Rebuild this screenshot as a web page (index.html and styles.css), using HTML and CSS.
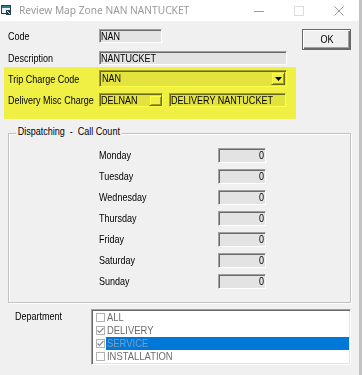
FILE: index.html
```html
<!DOCTYPE html>
<html lang="en">
<head>
<meta charset="utf-8">
<title>Review Map Zone</title>
<link rel="stylesheet" href="styles.css">
</head>
<body>
<div class="window">
  <header class="titlebar">
    <svg class="appicon" width="10" height="10" viewBox="0 0 10 10">
      <rect x="0.5" y="0.5" width="9" height="8" fill="#e8f0f4" stroke="#23404f"/>
      <rect x="1" y="1" width="8" height="2" fill="#2f7a90"/>
      <path d="M5 5h5v5H5z" fill="#23404f"/>
      <path d="M6 6l3 3" stroke="#e8f0f4"/>
    </svg>
    <span class="title">Review Map Zone NAN NANTUCKET</span>
    <div class="caption">
      <span class="cap-btn"><svg width="10" height="10" viewBox="0 0 10 10"><path d="M0 5.5h10" stroke="#9b9b9b"/></svg></span>
      <span class="cap-btn"><svg width="10" height="10" viewBox="0 0 10 10"><rect x="0.5" y="0.5" width="9" height="9" fill="none" stroke="#dcdcdc"/></svg></span>
      <span class="cap-btn"><svg width="10" height="10" viewBox="0 0 10 10"><path d="M0.5 0.5l9 9M9.5 0.5l-9 9" stroke="#9b9b9b"/></svg></span>
    </div>
  </header>
  <main class="client">
    <div class="top">
      <div class="fields">
        <div class="row">
          <span class="lbl">Code</span>
          <div class="edit code"><span class="t">NAN</span></div>
        </div>
        <div class="row gap8">
          <span class="lbl">Description</span>
          <div class="edit desc"><span class="t">NANTUCKET</span></div>
        </div>
        <div class="hl">
          <div class="row">
            <span class="lbl">Trip Charge Code</span>
            <div class="combo">
              <span class="combo-text"><span class="t">NAN</span></span>
              <span class="rbtn drop"><svg width="7" height="4" viewBox="0 0 7 4"><path d="M0 0h7L3.5 4z" fill="#000"/></svg></span>
            </div>
          </div>
          <div class="row gap6">
            <span class="lbl">Delivery Misc Charge</span>
            <div class="edit misc"><span class="misc-text"><span class="t">DELNAN</span></span><span class="rbtn mini"></span></div>
            <div class="edit miscdesc"><span class="t">DELIVERY NANTUCKET</span></div>
          </div>
        </div>
      </div>
      <button class="ok" type="button"><span class="t tc">OK</span></button>
    </div>

    <section class="group">
      <div class="group-title">Dispatching  -  Call Count</div>
      <div class="days">
        <span class="day">Monday</span><div class="edit num"><span class="t tr">0</span></div>
        <span class="day">Tuesday</span><div class="edit num"><span class="t tr">0</span></div>
        <span class="day">Wednesday</span><div class="edit num"><span class="t tr">0</span></div>
        <span class="day">Thursday</span><div class="edit num"><span class="t tr">0</span></div>
        <span class="day">Friday</span><div class="edit num"><span class="t tr">0</span></div>
        <span class="day">Saturday</span><div class="edit num"><span class="t tr">0</span></div>
        <span class="day">Sunday</span><div class="edit num"><span class="t tr">0</span></div>
      </div>
    </section>

    <div class="dept">
      <span class="dept-lbl">Department</span>
      <ul class="listbox">
        <li class="item"><span class="chk"></span><span class="txt"><span class="t">ALL</span></span></li>
        <li class="item"><span class="chk"><svg width="7" height="7" viewBox="0 0 7 7"><path d="M0.5 3.5l2 2 4-4.5" fill="none" stroke="#8a8a8a" stroke-width="1.2"/></svg></span><span class="txt"><span class="t">DELIVERY</span></span></li>
        <li class="item sel"><span class="chk"><svg width="7" height="7" viewBox="0 0 7 7"><path d="M0.5 3.5l2 2 4-4.5" fill="none" stroke="#8a8a8a" stroke-width="1.2"/></svg></span><span class="txt"><span class="t">SERVICE</span></span></li>
        <li class="item"><span class="chk"></span><span class="txt"><span class="t">INSTALLATION</span></span></li>
      </ul>
    </div>
  </main>
</div>
</body>
</html>
```

FILE: styles.css
```css
* { box-sizing: border-box; }
html, body { margin: 0; padding: 0; }
body {
  width: 362px;
  height: 375px;
  overflow: hidden;
  background: #f0f0f0;
  font-family: "Liberation Sans", Arial, sans-serif;
  font-size: 11px;
  line-height: 14px;
  color: #000;
}

/* condensed text, like the narrow dialog font */
.t,
.lbl,
.day,
.dept-lbl,
.group-title {
  display: inline-block;
  white-space: nowrap;
  transform: scaleX(0.82);
  transform-origin: 0 50%;
}
.tr { transform-origin: 100% 50%; }
.tc { transform-origin: 50% 50%; }

.window {
  width: 362px;
  height: 375px;
  border-right: 3px solid #c3c3c3;
  display: flex;
  flex-direction: column;
}
.titlebar {
  flex: none;
  height: 21px;
  background: #fff;
  display: flex;
  align-items: center;
}
.appicon { flex: none; margin: 0 8px 1px 1px; }
.title {
  flex: 1;
  font-family: "Noto Sans", sans-serif;
  font-size: 10.2px;
  line-height: 21px;
  color: #9a9a9a;
  white-space: nowrap;
  overflow: hidden;
}
.caption { display: flex; flex: none; }
.cap-btn {
  width: 40px;
  height: 21px;
  display: flex;
  align-items: center;
  justify-content: center;
}

.client { flex: 1; padding: 8px 8px 0 8px; }
.top { display: flex; justify-content: space-between; align-items: flex-start; }
.fields { display: flex; flex-direction: column; }
.row { display: flex; align-items: center; }
.gap8 { margin-top: 8px; }
.gap6 { margin-top: 6px; }
.lbl { width: 91px; flex: none; line-height: 14px; }

.edit {
  height: 14px;
  background: #e3e3e3;
  border: 1px solid;
  border-color: #a0a0a0 #fff #fff #a0a0a0;
  box-shadow: inset 1px 1px #696969;
  padding: 0 1px 0 1px;
  line-height: 12px;
  white-space: nowrap;
  overflow: hidden;
}
.code { width: 63px; }
.desc { width: 188px; }

.hl {
  position: relative;
  margin: 2px 0 0 -4px;
  padding: 3px 9px 12px 4px;
  width: 292px;
}
.hl::after {
  content: "";
  position: absolute;
  inset: 0;
  background: #ffff48;
  mix-blend-mode: multiply;
  pointer-events: none;
}

.combo {
  width: 188px;
  height: 17px;
  display: flex;
  align-items: center;
  background: #e3e3e3;
  border: 1px solid;
  border-color: #a0a0a0 #fff #fff #a0a0a0;
  box-shadow: inset 1px 1px #696969;
  padding: 1px;
}
.combo-text { flex: 1; line-height: 13px; padding-left: 1px; overflow: hidden; }
.rbtn {
  display: flex;
  align-items: center;
  justify-content: center;
  flex: none;
  background: #f0f0f0;
  border: 1px solid;
  border-color: #e3e3e3 #696969 #696969 #e3e3e3;
  box-shadow: inset 1px 1px #fff, inset -1px -1px #a0a0a0;
}
.drop { width: 14px; height: 13px; }
.misc { width: 64px; display: flex; padding-right: 0; }
.misc-text { flex: 1; }
.mini { width: 13px; height: 11px; align-self: flex-end; }
.miscdesc { width: 117px; margin-left: 6px; }

.ok {
  flex: none;
  width: 49px;
  height: 21px;
  padding: 0;
  font: inherit;
  line-height: 17px;
  color: #000;
  background: #f0f0f0;
  border: 1px solid #696969;
  box-shadow: inset 1px 1px #fff, inset -1px -1px #696969, inset -2px -2px #a0a0a0;
}

.group {
  margin-top: 14px;
  border: 1px solid #c2c2c2;
  box-shadow: inset 1px 1px #fff, 1px 1px #fff;
  padding: 0 0 13px 0;
}
.group-title {
  display: block;
  width: max-content;
  margin: -10px 0 0 7px;
  padding: 0 2px;
  background: #f0f0f0;
  white-space: pre;
  line-height: 14px;
}
.days {
  margin-top: 10px;
  padding-left: 90px;
  display: grid;
  grid-template-columns: 119px 48px;
  grid-auto-rows: 15px;
  row-gap: 6px;
}
.day { line-height: 15px; }
.num { height: 15px; line-height: 13px; text-align: right; padding-right: 1px; }

.dept { margin-top: 6px; display: flex; padding-left: 7px; }
.dept-lbl { width: 76px; flex: none; line-height: 14px; }
.listbox {
  list-style: none;
  margin: 0;
  width: 260px;
  height: 56px;
  background: #fff;
  border: 1px solid;
  border-color: #a0a0a0 #fff #fff #a0a0a0;
  box-shadow: inset 1px 1px #696969, inset -1px -1px #e3e3e3;
  padding: 1px;
}
.item {
  display: flex;
  align-items: center;
  height: 13px;
  font-size: 11.5px;
  color: #6d6d6d;
}
.chk {
  flex: none;
  width: 9px;
  height: 9px;
  margin: 0 1px 0 3px;
  border: 1px solid #b3b3b3;
  background: #fff;
  display: flex;
  align-items: center;
  justify-content: center;
}
.txt { flex: 1; height: 13px; line-height: 13px; padding-left: 1px; white-space: nowrap; overflow: hidden; }
.sel .txt { background: #0078d7; color: #7d9cc4; }
```
